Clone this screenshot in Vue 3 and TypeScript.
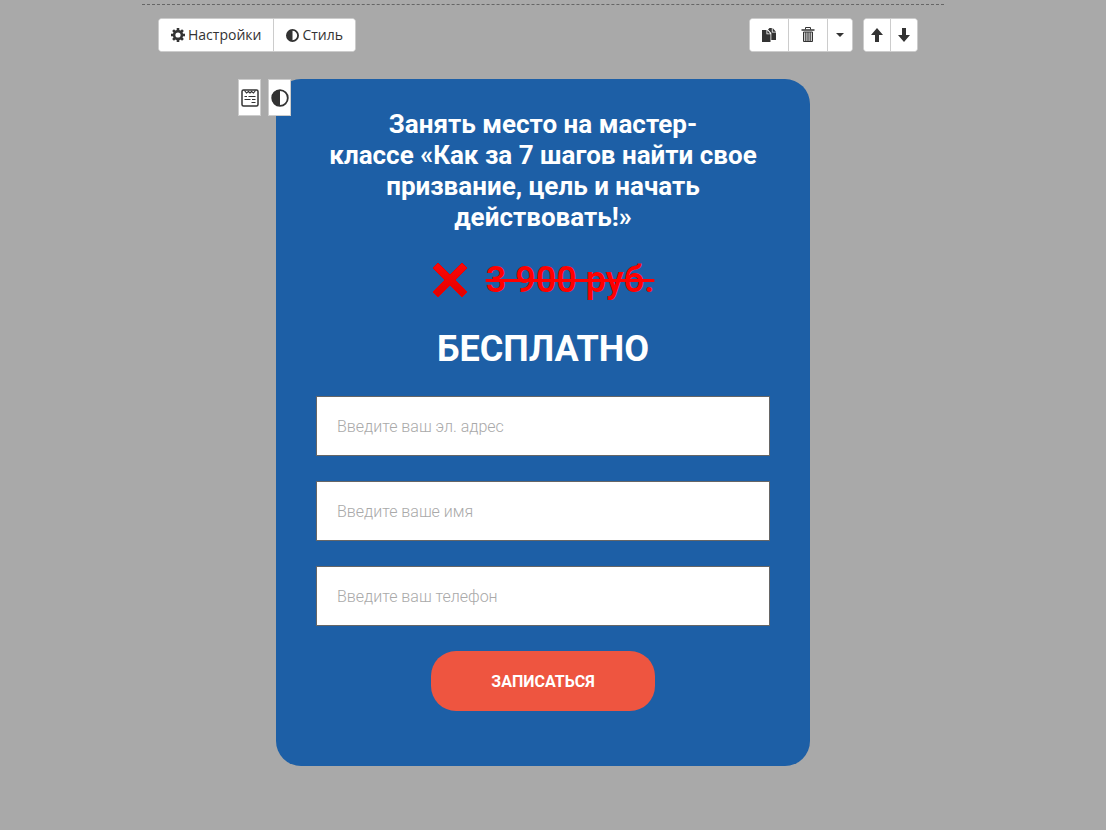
<script setup lang="ts">
import { reactive } from 'vue'

interface Field {
  id: 'email' | 'name' | 'phone'
  type: string
  placeholder: string
}

const fields: Field[] = [
  { id: 'email', type: 'email', placeholder: 'Введите ваш эл. адрес' },
  { id: 'name', type: 'text', placeholder: 'Введите ваше имя' },
  { id: 'phone', type: 'tel', placeholder: 'Введите ваш телефон' },
]

const form = reactive({ email: '', name: '', phone: '' })
</script>

<template>
  <main class="page">
    <section class="block">
      <div class="toolbar">
        <div class="group">
          <button type="button" class="tool labelled">
            <svg class="icon" viewBox="0 0 14 14" aria-hidden="true">
              <g fill="#333">
                <rect v-for="a in [0, 45, 90, 135]" :key="a" x="5.7" y="0" width="2.6" height="14" :transform="`rotate(${a} 7 7)`" />
                <circle cx="7" cy="7" r="5.2" />
              </g>
              <circle cx="7" cy="7" r="2.6" fill="#fff" />
            </svg>
            Настройки
          </button>
          <button type="button" class="tool labelled">
            <svg class="icon small" viewBox="0 0 14 14" aria-hidden="true">
              <circle cx="7" cy="7" r="6" fill="#fff" stroke="#333" stroke-width="2" />
              <path d="M7 1a6 6 0 0 0 0 12z" fill="#333" />
            </svg>
            Стиль
          </button>
        </div>
        <div class="actions">
          <div class="group">
            <button type="button" class="tool wide" aria-label="Копировать">
              <svg class="glyph" viewBox="0 0 16 16" fill="#333" aria-hidden="true">
                <path d="M1 3h4.500v4.200h4V15H1z" />
                <path d="M6.300 3.200l3 3.200h-3z" />
                <path d="M7 2.500L8.500 1h2.300v4.500H15V13h-4.700V6z" />
                <path d="M11.600 1L15 4.700h-3.400z" />
              </svg>
            </button>
            <button type="button" class="tool wide" aria-label="Удалить">
              <svg class="glyph" viewBox="0 0 16 16" fill="none" stroke="#333" aria-hidden="true">
                <path d="M5.500 2.500V.5h5v2" />
                <path d="M1.500 3h13" stroke-width="1.400" />
                <path d="M3.500 5v9.500h9V5z" fill="#ccc" />
                <path d="M5.800 5v9M8 5v9M10.200 5v9" />
              </svg>
            </button>
            <button type="button" class="tool narrow" aria-label="Ещё">
              <svg class="caret" viewBox="0 0 8 4" aria-hidden="true"><path d="M0 0h8L4 4z" fill="#333" /></svg>
            </button>
          </div>
          <div class="group">
            <button type="button" class="tool arrow" aria-label="Вверх">
              <svg class="icon" viewBox="0 0 14 14" aria-hidden="true"><path d="M7 0l6 7H9v7H5V7H1z" fill="#333" /></svg>
            </button>
            <button type="button" class="tool arrow" aria-label="Вниз">
              <svg class="icon" viewBox="0 0 14 14" aria-hidden="true"><path d="M7 14l6-7H9V0H5v7H1z" fill="#333" /></svg>
            </button>
          </div>
        </div>
      </div>

      <form class="card" @submit.prevent>
        <div class="badges">
          <button type="button" class="badge" aria-label="Настройки формы">
            <svg class="badge-icon" viewBox="0 0 18 18" fill="none" stroke="#333" aria-hidden="true">
              <rect x="1" y="1" width="16" height="16" rx="1.500" stroke-width="1.500" />
              <path d="M3.500 1.500l2 2.500l2-1.500l1.500 1.500l1.500-1.500l2 1.500l2-2.500" stroke-width="1.200" />
              <path d="M3.500 7.500h2.500M7.500 7.500h7M3.500 10.500h6M11 10.500h3.500M10.500 13.500h4" stroke-width="1.200" />
            </svg>
          </button>
          <button type="button" class="badge" aria-label="Стиль формы">
            <svg class="badge-icon" viewBox="0 0 18 18" aria-hidden="true">
              <circle cx="9" cy="9" r="7.800" fill="#fff" stroke="#333" stroke-width="1.800" />
              <path d="M9 1a8 8 0 0 0 0 16z" fill="#333" />
            </svg>
          </button>
        </div>

        <h1 class="title">Занять место на мастер-<br />классе «Как за 7 шагов найти свое призвание, цель и начать действовать!»</h1>
        <p class="price">
          <svg class="cross" viewBox="0 0 36 36" aria-hidden="true">
            <defs>
              <linearGradient id="cross-fill" x1="0" y1="0" x2="0" y2="1">
                <stop offset="0" stop-color="#ff0808" />
                <stop offset="1" stop-color="#df0000" />
              </linearGradient>
            </defs>
            <path d="M6 1L18 13L30 1L35 6L23 18L35 30L30 35L18 23L6 35L1 30L13 18L1 6z" fill="url(#cross-fill)" stroke="#ed0000" stroke-linejoin="round" />
          </svg>
          <s>3 900 руб.</s>
        </p>
        <p class="free">БЕСПЛАТНО</p>

        <div class="fields">
          <input
            v-for="field in fields"
            :id="field.id"
            :key="field.id"
            v-model="form[field.id]"
            class="field"
            :type="field.type"
            :name="field.id"
            :placeholder="field.placeholder"
            :aria-label="field.placeholder"
          />
        </div>
        <button type="submit" class="submit">ЗАПИСАТЬСЯ</button>
      </form>
    </section>
  </main>
</template>

<style>
body {
  background: #a9a9a9;
}
</style>

<style scoped>
.page {
  padding: 4px 20px 64px 0;
  font-family: Roboto, sans-serif;
}

.block {
  box-sizing: border-box;
  max-width: 802px;
  margin: 0 auto;
  border-top: 1px dashed #666;
  padding-top: 13px;
}

.toolbar,
.actions,
.group {
  display: flex;
}

.toolbar {
  justify-content: space-between;
  padding: 0 26px 0 16px;
}

.actions {
  gap: 10px;
}

.group {
  box-sizing: border-box;
  height: 34px;
  border: 1px solid #ccc;
  border-radius: 4px;
  background: #fff;
  overflow: hidden;
}

.tool {
  display: flex;
  align-items: center;
  justify-content: center;
  box-sizing: border-box;
  margin: 0;
  border: 0;
  padding: 0;
  background: #fff;
  color: #333;
  font: 14px/18px "Open Sans", sans-serif;
  cursor: pointer;
}

.tool + .tool {
  border-left: 1px solid #ccc;
}

.labelled {
  gap: 3px;
  padding: 0 12px;
}

.wide {
  width: 38px;
}

.wide + .wide {
  width: 39px;
}

.narrow {
  width: 25px;
}

.arrow {
  width: 26px;
}

.arrow + .arrow {
  width: 27px;
}

.icon {
  width: 14px;
  height: 14px;
}

.icon.small {
  width: 13px;
  height: 13px;
}

.glyph {
  width: 16px;
  height: 16px;
}

.caret {
  width: 8px;
  height: 4px;
}

.card {
  position: relative;
  display: flex;
  flex-direction: column;
  align-items: center;
  box-sizing: border-box;
  max-width: 534px;
  margin: 27px auto 0;
  border-radius: 25px;
  padding: 30px 40px 55px;
  background: #1d5fa6;
  color: #fff;
  text-align: center;
}

.badges {
  position: absolute;
  top: 0;
  left: -38px;
  display: flex;
  gap: 7px;
}

.badge {
  display: flex;
  align-items: center;
  justify-content: center;
  width: 23px;
  height: 37px;
  border: 1px solid #ccc;
  padding: 0;
  background: #fff;
  cursor: pointer;
}

.badge-icon {
  flex: none;
  width: 18px;
  height: 18px;
}

.title {
  margin: 0;
  font-size: 26px;
  font-weight: 700;
  line-height: 31px;
}

.price,
.free {
  margin: 25px 0 0;
  font-size: 36px;
  font-weight: 700;
  line-height: 44px;
}

.price {
  display: flex;
  align-items: center;
  gap: 18px;
  color: #f00;
  font-weight: 600;
}

.cross {
  width: 36px;
  height: 36px;
}

.fields {
  display: grid;
  gap: 25px;
  width: 100%;
  margin: 25px 0;
}

.field {
  box-sizing: border-box;
  width: 100%;
  height: 60px;
  margin: 0;
  border: 1px solid #666;
  border-radius: 0;
  padding: 0 20px;
  background: #fff;
  color: #333;
  font: 300 16px Roboto, sans-serif;
}

.field::placeholder {
  color: #a9a9a9;
  opacity: 1;
}

.submit {
  height: 60px;
  border: 0;
  border-radius: 25px;
  padding: 0 60px;
  background: #ee5540;
  color: #fff;
  font: 700 16px Roboto, sans-serif;
  cursor: pointer;
}
</style>
